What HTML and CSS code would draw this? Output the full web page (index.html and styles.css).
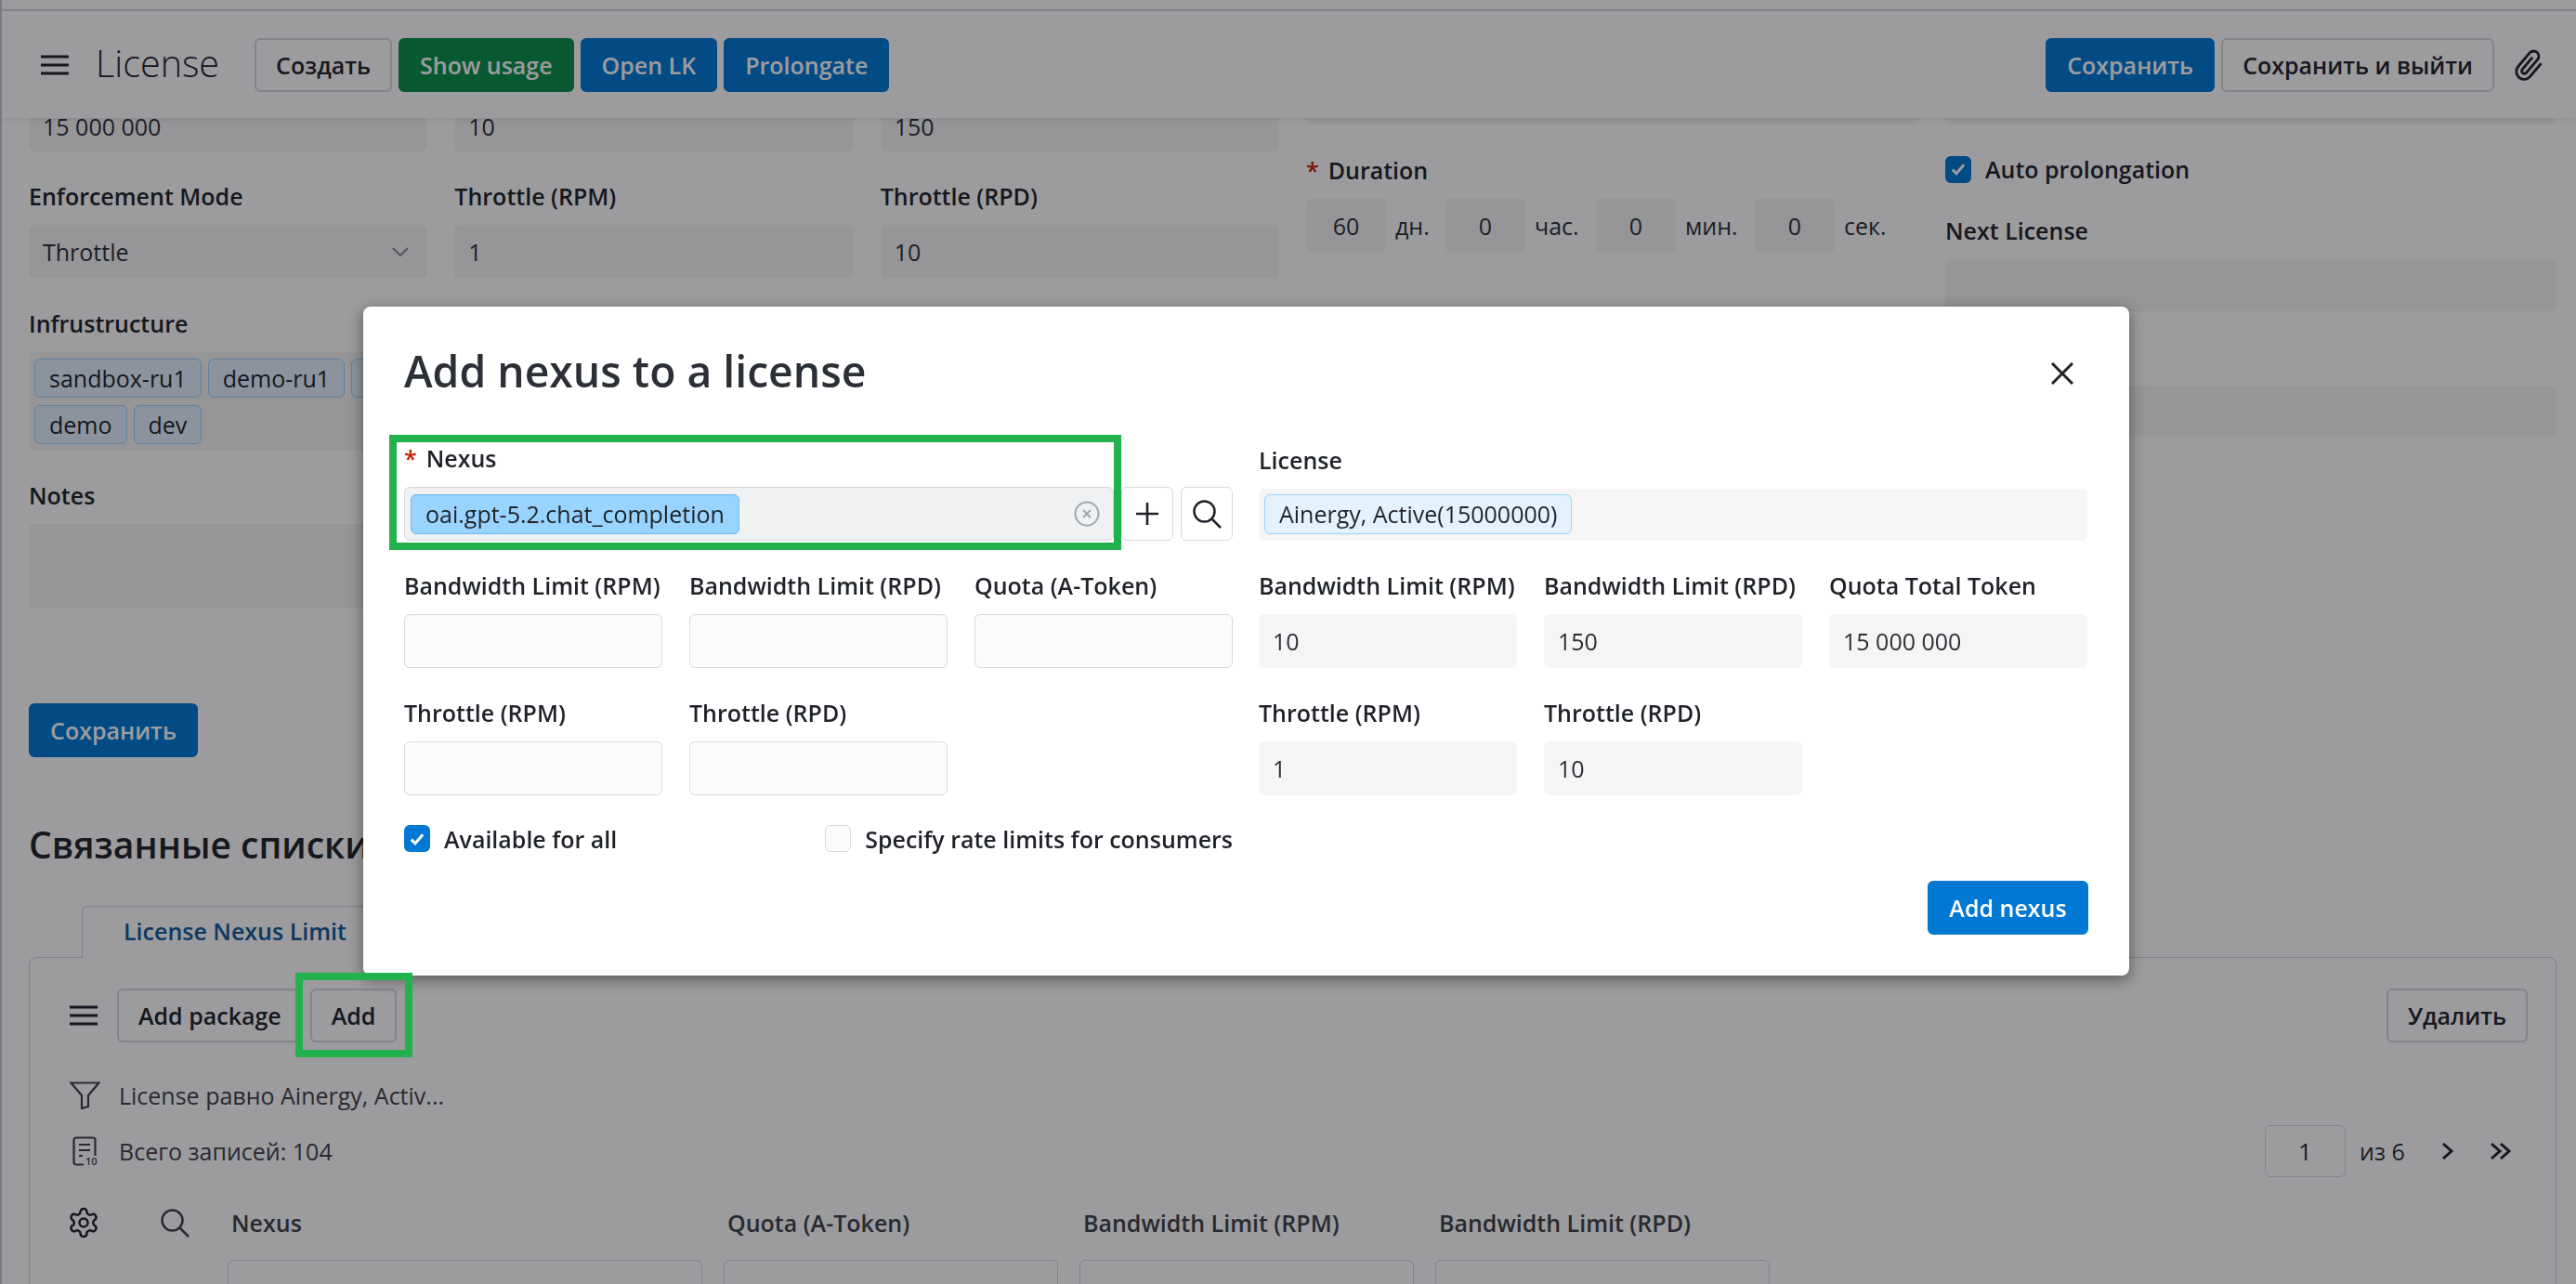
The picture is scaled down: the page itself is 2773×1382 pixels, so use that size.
FILE: index.html
```html
<!DOCTYPE html>
<html lang="ru">
<head>
    <meta charset="UTF-8">
    <meta name="viewport" content="width=device-width, initial-scale=1.0">
    <title>License</title>
    <link rel="stylesheet" href="styles.css">
</head>
<body>
  <div class="page">
    <header class="topbar">
      <svg class="ico-menu" viewBox="0 0 30 22"><path d="M0 2h30M0 11h30M0 20h30"/></svg>
      <h1 class="page-title">License</h1>
      <button class="btn">Создать</button>
      <button class="btn btn-green">Show usage</button>
      <button class="btn btn-blue">Open LK</button>
      <button class="btn btn-blue">Prolongate</button>
      <div class="topbar-right">
        <button class="btn btn-blue">Сохранить</button>
        <button class="btn">Сохранить и выйти</button>
        <svg class="ico-clip" viewBox="0 0 24 24"><path d="M20.4 11.4l-8.6 8.9a5.6 5.6 0 0 1-8-7.9l8.9-9.1a3.7 3.7 0 0 1 5.3 5.2l-8.8 9a1.9 1.9 0 0 1-2.7-2.6l8-8.3"/></svg>
      </div>
    </header>

    <div class="form-grid">
      <div class="zone">
        <div class="row3">
          <div class="box box-stub">15 000 000</div>
          <div class="box box-stub">10</div>
          <div class="box box-stub">150</div>
        </div>
        <div class="row3">
          <div class="field">
            <label>Enforcement Mode</label>
            <div class="box box-select">Throttle
              <svg class="ico-down" viewBox="0 0 18 10"><path d="M1 1l8 8 8-8"/></svg>
            </div>
          </div>
          <div class="field">
            <label>Throttle (RPM)</label>
            <div class="box">1</div>
          </div>
          <div class="field">
            <label>Throttle (RPD)</label>
            <div class="box">10</div>
          </div>
        </div>
        <div class="field">
          <label>Infrustructure</label>
          <div class="tag-box">
            <div class="tag-row">
              <span class="tag">sandbox-ru1</span>
              <span class="tag">demo-ru1</span>
              <span class="tag tag-under"></span>
            </div>
            <div class="tag-row">
              <span class="tag">demo</span>
              <span class="tag">dev</span>
            </div>
          </div>
        </div>
        <div class="field">
          <label>Notes</label>
          <div class="box notes"></div>
        </div>
        <button class="btn btn-blue save-left">Сохранить</button>
      </div>

      <div class="zone zone-mid">
        <div class="box"></div>
        <div class="field">
          <label><span class="req">*</span>Duration</label>
          <div class="duration">
            <div class="box box-num">60</div><span class="unit unit-d">дн.</span>
            <div class="box box-num">0</div><span class="unit unit-h">час.</span>
            <div class="box box-num">0</div><span class="unit unit-m">мин.</span>
            <div class="box box-num">0</div><span class="unit">сек.</span>
          </div>
        </div>
      </div>

      <div class="zone zone-end">
        <div class="box"></div>
        <div class="check-line">
          <span class="check check-dim"><svg viewBox="0 0 16 16"><path d="M3.5 8.5l3 3 6-7"/></svg></span>
          <span class="check-text">Auto prolongation</span>
        </div>
        <div class="field">
          <label>Next License</label>
          <div class="box box-next"></div>
        </div>
        <div class="box box-after"></div>
      </div>
    </div>

    <section class="related">
      <h2 class="related-title">Связанные списки</h2>
      <div class="tab">License Nexus Limit</div>
      <div class="panel">
        <div class="toolbar">
          <svg class="ico-menu" viewBox="0 0 30 22"><path d="M0 2h30M0 11h30M0 20h30"/></svg>
          <div class="toolbar-btns">
            <button class="btn">Add package</button>
            <button class="btn">Add</button>
          </div>
          <button class="btn btn-del">Удалить</button>
        </div>
        <div class="info-line filter-line">
          <svg class="ico-filter" viewBox="0 0 33 30"><path d="M1.500 1.500h30L20 15v12l-7 2V15z"/></svg>
          <span>License равно Ainergy, Activ...</span>
        </div>
        <div class="info-line count-line">
          <svg class="ico-count" viewBox="0 0 28 32">
            <path d="M12 30.500H4a2.500 2.500 0 0 1-2.500-2.500V4A2.500 2.500 0 0 1 4 1.500h18A2.500 2.500 0 0 1 24.500 4v17"/>
            <path d="M7 9h12M7 15h12M7 21h4"/>
            <text x="14" y="31">10</text>
          </svg>
          <span>Всего записей: 104</span>
          <div class="pager">
            <div class="pager-input">1</div>
            <span class="pager-text">из 6</span>
            <svg class="ico-next" viewBox="0 0 14 20"><path d="M2 2l9 8-9 8"/></svg>
            <svg class="ico-last" viewBox="0 0 24 20"><path d="M2 2l9 8-9 8M12 2l9 8-9 8"/></svg>
          </div>
        </div>
        <div class="thead">
          <div class="thead-tools">
            <svg class="ico-gear" viewBox="0 0 24 24"><path d="M12.220 2h-.44a2 2 0 0 0-2 2v.18a2 2 0 0 1-1 1.730l-.43.25a2 2 0 0 1-2 0l-.15-.08a2 2 0 0 0-2.730.73l-.22.38a2 2 0 0 0 .73 2.730l.15.1a2 2 0 0 1 1 1.720v.51a2 2 0 0 1-1 1.740l-.15.09a2 2 0 0 0-.73 2.730l.22.38a2 2 0 0 0 2.730.73l.15-.08a2 2 0 0 1 2 0l.43.25a2 2 0 0 1 1 1.730V20a2 2 0 0 0 2 2h.44a2 2 0 0 0 2-2v-.18a2 2 0 0 1 1-1.730l.43-.25a2 2 0 0 1 2 0l.15.08a2 2 0 0 0 2.730-.73l.22-.39a2 2 0 0 0-.73-2.730l-.15-.08a2 2 0 0 1-1-1.740v-.5a2 2 0 0 1 1-1.740l.15-.09a2 2 0 0 0 .73-2.730l-.22-.38a2 2 0 0 0-2.730-.73l-.15.08a2 2 0 0 1-2 0l-.43-.25a2 2 0 0 1-1-1.730V4a2 2 0 0 0-2-2z"/><circle cx="12" cy="12" r="3"/></svg>
            <svg class="ico-search ico-search-dim" viewBox="0 0 31 31"><circle cx="12.500" cy="12.500" r="11"/><path d="M20.500 20.500L30 30"/></svg>
          </div>
          <span>Nexus</span>
          <span>Quota (A-Token)</span>
          <span>Bandwidth Limit (RPM)</span>
          <span>Bandwidth Limit (RPD)</span>
        </div>
        <div class="tfilter">
          <div></div>
          <div class="tfilter-input"></div>
          <div class="tfilter-input"></div>
          <div class="tfilter-input"></div>
          <div class="tfilter-input"></div>
        </div>
      </div>
    </section>
  </div>

  <div class="overlay"></div>

  <div class="modal">
    <div class="modal-head">
      <h3 class="modal-title">Add nexus to a license</h3>
      <svg class="ico-close" viewBox="0 0 24 24"><path d="M1 1l22 22M23 1L1 23"/></svg>
    </div>
    <div class="modal-grid">
      <div class="modal-col">
        <div class="field">
          <label><span class="req">*</span>Nexus</label>
          <div class="nexus-row">
            <div class="nexus-input">
              <span class="chip">oai.gpt-5.2.chat_completion</span>
              <svg class="ico-clear" viewBox="0 0 28 28"><circle cx="14" cy="14" r="12.500"/><path d="M10 10l8 8M18 10l-8 8"/></svg>
            </div>
            <button class="icon-btn"><svg class="ico-plus" viewBox="0 0 24 24"><path d="M12 0v24M0 12h24"/></svg></button>
            <button class="icon-btn"><svg class="ico-search" viewBox="0 0 31 31"><circle cx="12.500" cy="12.500" r="11"/><path d="M20.500 20.500L30 30"/></svg></button>
          </div>
        </div>
        <div class="modal-row">
          <div class="field"><label>Bandwidth Limit (RPM)</label><div class="edit"></div></div>
          <div class="field"><label>Bandwidth Limit (RPD)</label><div class="edit"></div></div>
          <div class="field"><label>Quota (A-Token)</label><div class="edit"></div></div>
        </div>
        <div class="modal-row">
          <div class="field"><label>Throttle (RPM)</label><div class="edit"></div></div>
          <div class="field"><label>Throttle (RPD)</label><div class="edit"></div></div>
        </div>
        <div class="modal-checks">
          <div class="check-line check-first">
            <span class="check"><svg viewBox="0 0 16 16"><path d="M3.5 8.5l3 3 6-7"/></svg></span>
            <span class="check-text">Available for all</span>
          </div>
          <div class="check-line">
            <span class="check check-off"></span>
            <span class="check-text">Specify rate limits for consumers</span>
          </div>
        </div>
      </div>
      <div class="modal-col">
        <div class="field">
          <label class="label-lic">License</label>
          <div class="lic-input"><span class="chip chip-light">Ainergy, Active(15000000)</span></div>
        </div>
        <div class="modal-row">
          <div class="field"><label>Bandwidth Limit (RPM)</label><div class="box">10</div></div>
          <div class="field"><label>Bandwidth Limit (RPD)</label><div class="box">150</div></div>
          <div class="field"><label>Quota Total Token</label><div class="box">15 000 000</div></div>
        </div>
        <div class="modal-row">
          <div class="field"><label>Throttle (RPM)</label><div class="box">1</div></div>
          <div class="field"><label>Throttle (RPD)</label><div class="box">10</div></div>
        </div>
      </div>
    </div>
    <div class="modal-foot">
      <button class="btn btn-blue">Add nexus</button>
    </div>
  </div>

  <!-- рамки-пометки поверх скриншота -->
  <div class="mark mark-nexus"></div>
  <div class="mark mark-add"></div>
</body>
</html>
```
FILE: styles.css
```css
* {margin: 0; box-sizing: border-box;}
body {font-family: "Open Sans", "Liberation Sans", sans-serif; font-size: 25px; color: #1f2329; background: #fff; overflow: hidden;}
button {font-family: inherit;}
svg {flex: none; fill: none; stroke: currentColor;}

.page {height: 1382px; overflow: hidden; border-left: 2px solid #c8c9cc; padding-top: 10px; background: #fff;}

/* шапка */
.topbar {position: relative; z-index: 2; display: flex; align-items: center; height: 117px; padding: 0 32px 0 42px; background: #fff; border-top: 2px solid #d0d1d4; box-shadow: 0 2px 5px rgba(0, 0, 0, 0.08);}
.ico-menu {width: 30px; height: 22px; stroke-width: 3.2px;}
.page-title {font-size: 39.5px; font-weight: 300; line-height: 50px; margin: -3px 38px 0 29px;}
.topbar .btn {margin-right: 7px;}
.topbar-right {margin-left: auto; display: flex; align-items: center;}
.ico-clip {width: 36px; height: 36px; margin-left: 13px; stroke-width: 1.9px; transform: rotate(-4deg);}

.btn {height: 58px; padding: 0 21px; border: 2px solid #d5d7db; border-radius: 6px; background: #fff; color: #1f2329; font-size: 25px; font-weight: 600; white-space: nowrap;}
.btn-blue {background: #0078d4; border-color: #0078d4; color: #fff;}
.btn-green {background: #0a8f46; border-color: #0a8f46; color: #fff;}

/* форма на заднем плане */
.form-grid {display: grid; grid-template-columns: 1346px 659px 658px; column-gap: 29px; height: 805px; margin-top: -50px; padding-left: 29px;}
.zone {display: flex; flex-direction: column; gap: 31px;}
.row3 {display: grid; grid-template-columns: repeat(3, 1fr); column-gap: 29px;}
.zone:first-child {padding-top: 28px;}
.zone-end .check-line {height: 30px; margin: 1px 0 3px;}

.field label {display: block; height: 34px; line-height: 34px; margin-bottom: 14px; font-weight: 600; white-space: nowrap;}
.req {color: #c81e00; margin-right: 10px;}
.box {height: 58px; padding: 0 15px; line-height: 58px; background: #f5f5f5; border-radius: 6px; color: #2b2f36; white-space: nowrap;}
.box-stub {padding-top: 2px;}
.box-select {display: flex; align-items: center; justify-content: space-between; padding-right: 20px;}
.ico-down {width: 18px; height: 10px; stroke-width: 2px; color: #8a8d93;}
.notes {height: 91px;}

.tag-box {display: flex; flex-direction: column; gap: 8px; height: 106px; padding: 7px 6px; background: #f5f5f5; border-radius: 6px;}
.tag-row {display: flex; gap: 7px;}
.tag {height: 42px; padding: 0 15px; line-height: 41px; border: 1px solid #99d3ff; border-radius: 6px; background: #e3f2fd;}
.tag-under {width: 120px;}
.save-left {width: 182px; margin-top: 71px;}

.duration {display: flex; align-items: center;}
.box-num {width: 86px; padding: 0; text-align: center;}
.unit {margin-left: 10px; color: #2b2f36;}
.unit-d {width: 54px;}
.unit-h {width: 66px;}
.unit-m {width: 75px;}
.box-next {height: 56px;}
.box-after {height: 55px; margin-top: 49px;}

.check-line {display: flex; align-items: center; height: 29px;}
.check {display: flex; align-items: center; justify-content: center; width: 28px; height: 29px; margin-right: 15px; border-radius: 6px; background: #0078d4;}
.check svg {width: 22px; height: 22px; color: #fff; stroke-width: 2.2px;}
.check-off {background: #fcfcfd; border: 1px solid #d8dadf;}
.check-text {font-weight: 600; white-space: nowrap;}

/* связанные списки */
.related {padding-left: 29px; padding-right: 21px;}
.related-title {font-size: 39px; font-weight: 600; line-height: 54px;}
.tab {width: 335px; height: 56px; margin: 39px 0 -1px 57px; line-height: 52px; padding-left: 44px; background: #fff; border: 1px solid #d0d1d4; border-bottom: 0; border-radius: 6px 6px 0 0; color: #0f5a96; font-weight: 600; position: relative; z-index: 1;}
.panel {padding: 33px 30px 0 43px; border: 1px solid #d0d1d4; border-radius: 8px 8px 0 0; height: 400px;}
.toolbar {display: flex; align-items: center;}
.toolbar-btns {display: flex; gap: 8px; margin-left: 21px;}
.btn-del {margin-left: auto;}
.info-line {display: flex; align-items: center; color: #3e4249;}
.info-line > span {margin-left: 20px;}
.filter-line {height: 34px; margin-top: 40px;}
.ico-filter {width: 33px; height: 30px; stroke-width: 2.2px;}
.count-line {height: 56px; margin-top: 15px;}
.ico-count {width: 28px; height: 32px; margin: 0 2px 0 3px; stroke-width: 2.2px; overflow: visible;}
.ico-count text {font-size: 11px; font-weight: 600; fill: currentColor; stroke: none;}
.pager {display: flex; align-items: center; margin-left: auto; color: #1f2329; padding-right: 17px;}
.pager-input {width: 87px; height: 56px; line-height: 54px; text-align: center; border: 1px solid #d5d7db; border-radius: 6px;}
.pager-text {width: 88px; margin-left: 15px; color: #2b2f36;}
.ico-next {width: 14px; height: 20px; stroke-width: 3px;}
.ico-last {width: 24px; height: 20px; margin-left: 38px; stroke-width: 3px;}

.thead {display: grid; grid-template-columns: 147px 511px 360px 360px 360px; column-gap: 23px; align-items: center; height: 34px; margin-top: 30px; color: #3e4249; font-weight: 600;}
.thead > span {padding-left: 4px; white-space: nowrap;}
.thead-tools {display: flex; align-items: center; gap: 65px;}
.ico-gear {width: 36px; height: 38px; margin-left: -3px; stroke-width: 1.7px; color: #1f2329;}
.ico-search {width: 31px; height: 31px; stroke-width: 2.5px;}
.ico-search-dim {color: #3e4249;}
.tfilter {display: grid; grid-template-columns: 147px 511px 360px 360px 360px; column-gap: 23px; margin-top: 25px;}
.tfilter-input {height: 58px; border: 1px solid #d5d7db; border-radius: 6px;}

.overlay {position: fixed; inset: 0; z-index: 5; background: rgba(8, 8, 14, 0.4);}

/* модальное окно */
.modal {position: fixed; left: 391px; top: 330px; z-index: 6; width: 1901px; height: 720px; padding: 44px 44px 0 44px; background: #fff; border-radius: 8px; box-shadow: 0 4px 16px rgba(0, 0, 0, 0.45);}
.modal-head {display: flex; align-items: center; justify-content: space-between; height: 56px; margin-bottom: 46px;}
.modal-title {font-size: 46.3px; font-weight: 600; line-height: 56px; margin-top: -5px; color: #2b2f36;}
.ico-close {width: 24px; height: 24px; margin-right: 16px; stroke-width: 3px; color: #1f2329;}
.modal-grid {display: grid; grid-template-columns: 892px 892px; column-gap: 28px;}
.modal-col {display: flex; flex-direction: column; gap: 31px;}
.modal-row {display: grid; grid-template-columns: repeat(3, 278px); column-gap: 29px;}
.edit {height: 58px; background: #fbfbfc; border: 1px solid #d8dadf; border-radius: 6px;}
.nexus-row {display: flex; gap: 8px;}
.nexus-input {display: flex; align-items: center; justify-content: space-between; width: 764px; height: 58px; padding: 0 14px 0 6px; background: #f0f1f3; border: 1px solid #d5d7dc; border-radius: 6px;}
.chip {height: 43px; padding: 0 15px; line-height: 41px; background: #99d3ff; border: 1px solid #6bb9f5; border-radius: 6px; color: #1f2329; white-space: nowrap;}
.chip-light {display: inline-block; background: #e3f2fd; border-color: #99d3ff;}
.ico-clear {width: 28px; height: 28px; stroke-width: 2px; color: #a2a6ad;}
.icon-btn {display: flex; align-items: center; justify-content: center; width: 56px; height: 58px; padding: 0; border: 1px solid #d8dadf; border-radius: 6px; background: #fff; color: #1f2329;}
.ico-plus {width: 24px; height: 24px; stroke-width: 2.6px;}
.field .label-lic {position: relative; top: 2px; margin-bottom: 16px;}
.lic-input {height: 56px; padding: 6px; background: #f5f5f5; border-radius: 6px;}
.modal-checks {display: flex; margin-top: 1px;}
.check-first {width: 454px;}
.modal-foot {display: flex; justify-content: flex-end; margin-top: 31px;}
.modal-foot .btn {width: 173px; padding: 0;}

/* зелёные рамки */
.mark {position: fixed; z-index: 7; border: 8px solid #22b14c;}
.mark-nexus {left: 419px; top: 468px; width: 788px; height: 124px;}
.mark-add {left: 318px; top: 1047px; width: 126px; height: 91px;}
```
